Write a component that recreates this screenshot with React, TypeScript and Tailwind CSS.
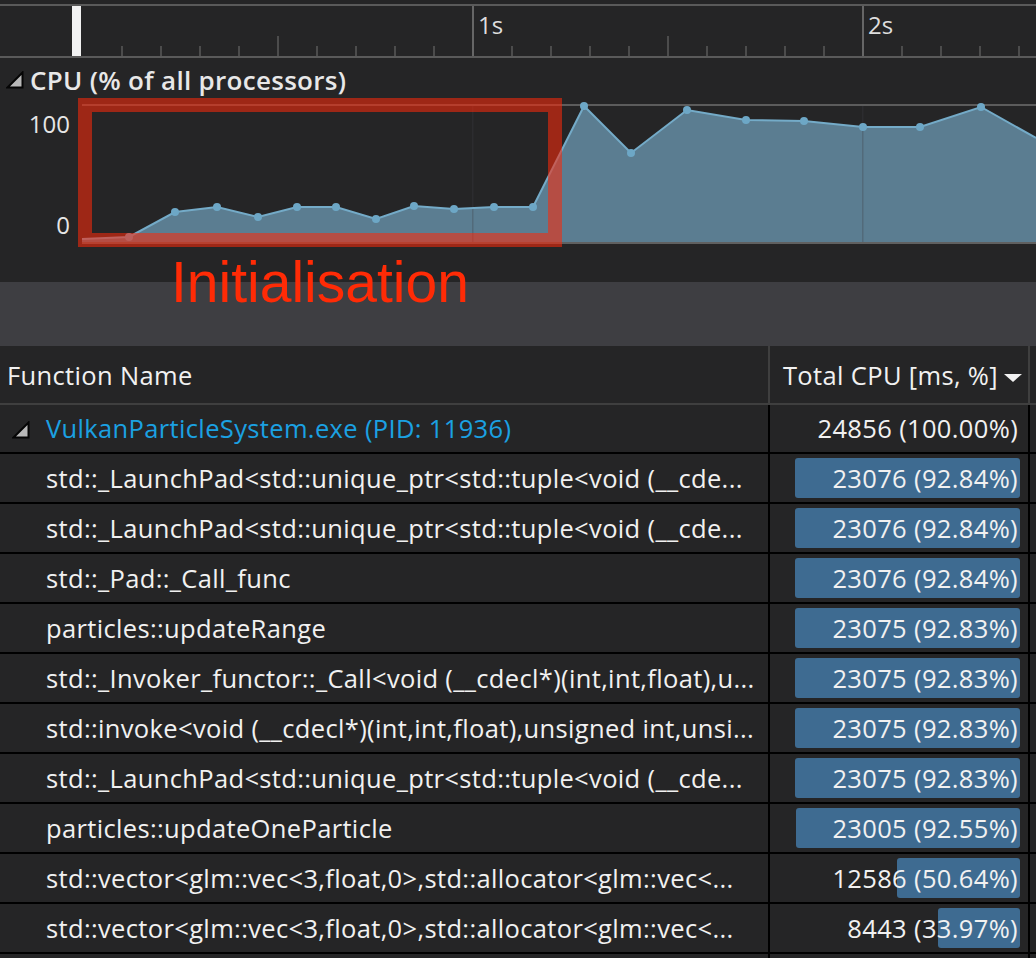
import React from "react"

const rows = [
    { name: "std::_LaunchPad<std::unique_ptr<std::tuple<void (__cde...", ms: 23076, pct: 92.84 },
    { name: "std::_LaunchPad<std::unique_ptr<std::tuple<void (__cde...", ms: 23076, pct: 92.84 },
    { name: "std::_Pad::_Call_func", ms: 23076, pct: 92.84 },
    { name: "particles::updateRange", ms: 23075, pct: 92.83 },
    { name: "std::_Invoker_functor::_Call<void (__cdecl*)(int,int,float),u...", ms: 23075, pct: 92.83 },
    { name: "std::invoke<void (__cdecl*)(int,int,float),unsigned int,unsi...", ms: 23075, pct: 92.83 },
    { name: "std::_LaunchPad<std::unique_ptr<std::tuple<void (__cde...", ms: 23075, pct: 92.83 },
    { name: "particles::updateOneParticle", ms: 23005, pct: 92.55 },
    { name: "std::vector<glm::vec<3,float,0>,std::allocator<glm::vec<...", ms: 12586, pct: 50.64 },
    { name: "std::vector<glm::vec<3,float,0>,std::allocator<glm::vec<...", ms: 8443, pct: 33.97 },
]

// cpu samples in chart-local coords (chart starts at x=82, y=100)
const points: [number, number][] = [
    [0, 139], [47, 137], [93, 112], [135, 107], [176, 117], [215, 107], [254, 107],
    [294, 119], [332, 106], [372, 109], [412, 107], [451, 107], [502, 6], [549, 53],
    [605, 10], [664, 20], [722, 21], [781, 27], [838, 27], [899, 7], [954, 38],
]

const ticks = Array.from({ length: 25 }, (_, i) => i + 1)

const Expander = ({ className }: { className?: string }) => (
    <svg width="18" height="18" viewBox="0 0 18 18" className={className}>
        <polygon points="1.5,16.5 16.5,1.5 16.5,16.5" fill="#b8b8b8" stroke="#050505" strokeWidth="2" strokeLinejoin="miter" />
    </svg>
)

const Ruler = () => (
    <div className="relative h-[60px]">
        <svg width="1036" height="60" className="block">
            <rect x="0" y="4" width="1036" height="2" fill="#5a5a5a" />
            <rect x="0" y="56" width="1036" height="2" fill="#5a5a5a" />
            {ticks.map(k => {
                const x = 83 + 39 * k
                if (k % 10 === 0) return <rect key={k} x={x - 1} y={6} width={2} height={50} fill="#666" />
                const top = k % 10 === 5 ? 36 : 46
                return <rect key={k} x={x - 1} y={top} width={2} height={56 - top} fill="#4c4c4c" />
            })}
            <rect x="72" y="6" width="9" height="50" fill="#f2f2f2" />
        </svg>
        <span className="absolute left-[478px] top-[13px] text-[24px] leading-none text-[#dedede]">1s</span>
        <span className="absolute left-[868px] top-[13px] text-[24px] leading-none text-[#dedede]">2s</span>
    </div>
)

const CpuChart = () => {
    const line = points.map(p => p.join(",")).join(" ")
    const area = `0,142 ${line} 954,142`
    return (
        <svg width="954" height="150" className="block">
            <rect x="0" y="4" width="954" height="2" fill="#5c5c5c" />
            <polygon points={area} fill="#5b7d91" />
            <rect x="390" y="6" width="1.5" height="136" fill="rgba(62,62,70,0.3)" />
            <rect x="780" y="6" width="1.5" height="136" fill="rgba(62,62,70,0.3)" />
            <polyline points={line} fill="none" stroke="#74abc8" strokeWidth="2" />
            {points.slice(1, -1).map(([x, y], i) => <circle key={i} cx={x} cy={y} r="4" fill="#6da7c6" />)}
            <rect x="0" y="142" width="954" height="2" fill="#606060" />
        </svg>
    )
}

const App = () => {
    return (
        <div className="h-[958px] w-[1036px] overflow-hidden bg-[#252526] font-['Open_Sans',sans-serif] text-[#f1f1f1]">
            <div className="relative">
                <Ruler />
                <div className="flex h-[40px] items-center gap-[6px] pl-[6px]">
                    <Expander />
                    <span className="text-[26px] font-semibold leading-none tracking-[0.3px] text-[#e8e8e8]">CPU (% of all processors)</span>
                </div>
                <div className="flex h-[150px]">
                    <div className="flex w-[82px] flex-col items-end pr-[12px] pt-[12px] text-[24px] leading-[24px] text-[#e6e6e6]">
                        <span>100</span>
                        <span className="mt-[77px]">0</span>
                    </div>
                    <CpuChart />
                </div>
                <div className="h-[32px]" />
                <div className="h-[64px] bg-[#3e3e42]" />

                <div className="absolute left-[78px] top-[98px] h-[149px] w-[484px] border-[14px] border-[rgba(250,41,10,0.57)]" />
                <div className="absolute left-[171px] top-[254px] font-['Liberation_Sans',Arial,sans-serif] text-[57px] leading-none text-[#ff2b06]">
                    Initialisation
                </div>
            </div>

            <div className="text-[25.5px] tracking-[0.35px]">
                <div className="flex h-[59px] border-b-2 border-[#3f3f3f]">
                    <div className="flex w-[770px] items-center border-r-2 border-[#3f3f3f] pl-[7px] pt-[2px]">Function Name</div>
                    <div className="flex w-[260px] items-center justify-end gap-[6px] border-r-2 border-[#3f3f3f] pr-[6px] pt-[2px]">
                        <span>Total CPU [ms, %]</span>
                        <svg width="18" height="8" viewBox="0 0 18 8" className="mt-[4px]">
                            <polygon points="0,0 18,0 9,8" fill="#f2f2f2" />
                        </svg>
                    </div>
                </div>

                <div className="flex h-[49px] border-b-2 border-black">
                    <div className="flex w-[770px] items-center border-r-2 border-black">
                        <Expander className="ml-[12px] mt-[2px]" />
                        <span className="ml-[16px] text-[#1ba1e2]">VulkanParticleSystem.exe (PID: 11936)</span>
                    </div>
                    <div className="flex w-[260px] items-center justify-end border-r-2 border-black pr-[10px]">24856 (100.00%)</div>
                </div>

                {rows.map((row, i) => (
                    <div key={i} className="flex h-[50px] border-b-2 border-black">
                        <div className="flex w-[770px] items-center overflow-hidden whitespace-nowrap border-r-2 border-black pl-[46px]">
                            {row.name}
                        </div>
                        <div className="relative flex w-[260px] items-center justify-end border-r-2 border-black pr-[10px]">
                            <div className="absolute bottom-[4px] right-[8px] top-[4px] rounded-[3px] bg-[#3e6b91]" style={{ width: (242 * row.pct) / 100 }} />
                            <span className="relative">{row.ms} ({row.pct.toFixed(2)}%)</span>
                        </div>
                    </div>
                ))}

                <div className="flex h-[50px]">
                    <div className="w-[770px] border-r-2 border-black" />
                    <div className="w-[260px] border-r-2 border-black" />
                </div>
            </div>
        </div>
    )
}

export default App
